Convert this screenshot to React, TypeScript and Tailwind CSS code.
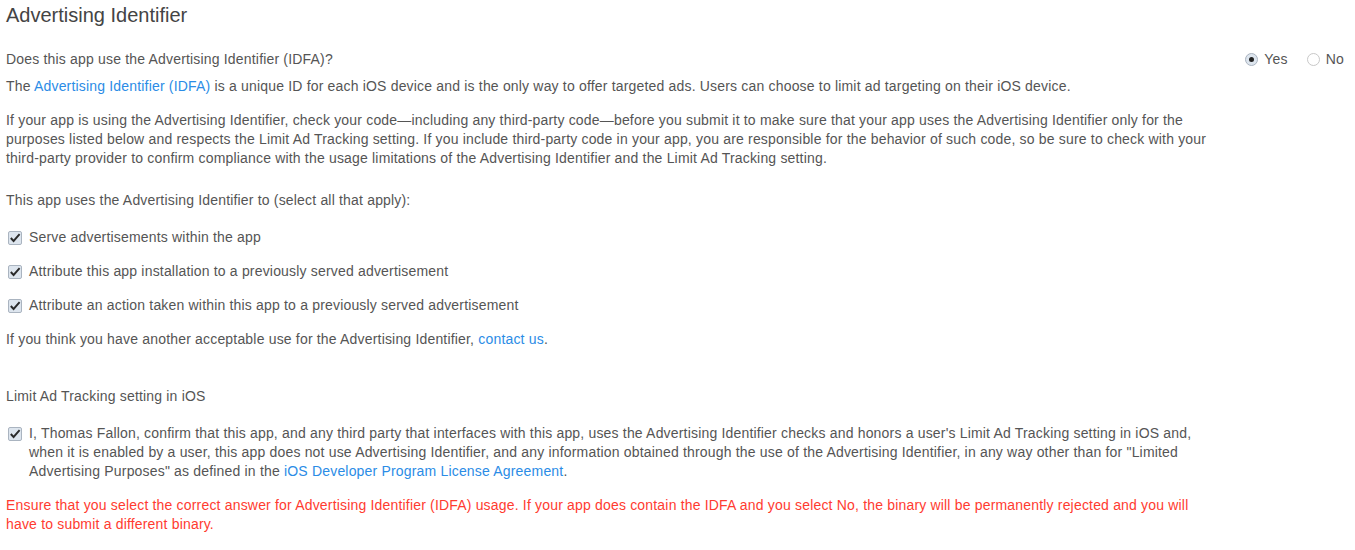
import { useState } from 'react'

const USES = [
  'Serve advertisements within the app',
  'Attribute this app installation to a previously served advertisement',
  'Attribute an action taken within this app to a previously served advertisement',
]

function Check({ checked, onChange }: { checked: boolean; onChange: () => void }) {
  return (
    <button
      type="button"
      onClick={onChange}
      className="mt-[3px] flex h-[14px] w-[14px] shrink-0 items-center justify-center rounded-[2px] border border-[#aab4c0] bg-[#dde5ee]"
    >
      {checked && (
        <svg viewBox="0 0 12 12" width="12" height="12" fill="none" stroke="#2a2a2a" strokeWidth="1.9" className="overflow-visible">
          <path d="M1.8 6 L4.6 9 L10.6 2.2" />
        </svg>
      )}
    </button>
  )
}

function Radio({ on, label, onClick }: { on: boolean; label: string; onClick: () => void }) {
  return (
    <label onClick={onClick} className="flex cursor-pointer items-center gap-[6px]">
      <span
        className={`flex h-[13px] w-[13px] items-center justify-center rounded-full border ${
          on ? 'border-[#aab4c0] bg-[#dde5ee]' : 'border-[#c8c8c8] bg-white'
        }`}
      >
        {on && <span className="h-[5px] w-[5px] rounded-full bg-[#222]" />}
      </span>
      <span>{label}</span>
    </label>
  )
}

export default function App() {
  const [uses, setUses] = useState(true)
  const [checks, setChecks] = useState([true, true, true])
  const [confirm, setConfirm] = useState(true)

  return (
    <div className="px-[6px] pt-[3px] font-['Liberation_Sans',Arial,sans-serif] text-[14px] leading-[19px] tracking-[0.18px] text-[#555]">
      <h1 className="text-[20px] leading-[24px] tracking-normal text-[#444]">Advertising Identifier</h1>

      <div className="mt-[23px] flex items-start justify-between">
        <p>Does this app use the Advertising Identifier (IDFA)?</p>
        <div className="flex gap-[19px] pr-[5px]">
          <Radio on={uses} label="Yes" onClick={() => setUses(true)} />
          <Radio on={!uses} label="No" onClick={() => setUses(false)} />
        </div>
      </div>

      <div className="max-w-[1215px]">
        <p className="mt-[8px]">
          The <a className="text-[#2b8ce6]" href="#">Advertising Identifier (IDFA)</a> is a unique ID for each iOS device
          and is the only way to offer targeted ads. Users can choose to limit ad targeting on their iOS device.
        </p>

        <p className="mt-[15px]">
          If your app is using the Advertising Identifier, check your code—including any third-party code—before you
          submit it to make sure that your app uses the Advertising Identifier only for the purposes listed below and
          respects the Limit Ad Tracking setting. If you include third-party code in your app, you are responsible for
          the behavior of such code, so be sure to check with your third-party provider to confirm compliance with the
          usage limitations of the Advertising Identifier and the Limit Ad Tracking setting.
        </p>

        <p className="mt-[23px]">This app uses the Advertising Identifier to (select all that apply):</p>

        <ul className="mt-[18px] flex flex-col gap-[15px]">
          {USES.map((u, i) => (
            <li key={u} className="flex items-start gap-[7px] pl-[2px]">
              <Check
                checked={checks[i]}
                onChange={() => setChecks(c => c.map((v, j) => (j === i ? !v : v)))}
              />
              <span>{u}</span>
            </li>
          ))}
        </ul>

        <p className="mt-[15px]">
          If you think you have another acceptable use for the Advertising Identifier,{' '}
          <a className="text-[#2b8ce6]" href="#">contact us</a>.
        </p>

        <p className="mt-[38px]">Limit Ad Tracking setting in iOS</p>

        <div className="mt-[18px] flex items-start gap-[7px] pl-[2px]">
          <Check checked={confirm} onChange={() => setConfirm(v => !v)} />
          <p>
            I, Thomas Fallon, confirm that this app, and any third party that interfaces with this app, uses the
            Advertising Identifier checks and honors a user's Limit Ad Tracking setting in iOS and, when it is enabled by
            a user, this app does not use Advertising Identifier, and any information obtained through the use of the
            Advertising Identifier, in any way other than for "Limited Advertising Purposes" as defined in the{' '}
            <a className="text-[#2b8ce6]" href="#">iOS Developer Program License Agreement</a>.
          </p>
        </div>

        <p className="mt-[15px] text-[#ff3b30]">
          Ensure that you select the correct answer for Advertising Identifier (IDFA) usage. If your app does contain the
          IDFA and you select No, the binary will be permanently rejected and you will have to submit a different binary.
        </p>
      </div>
    </div>
  )
}
